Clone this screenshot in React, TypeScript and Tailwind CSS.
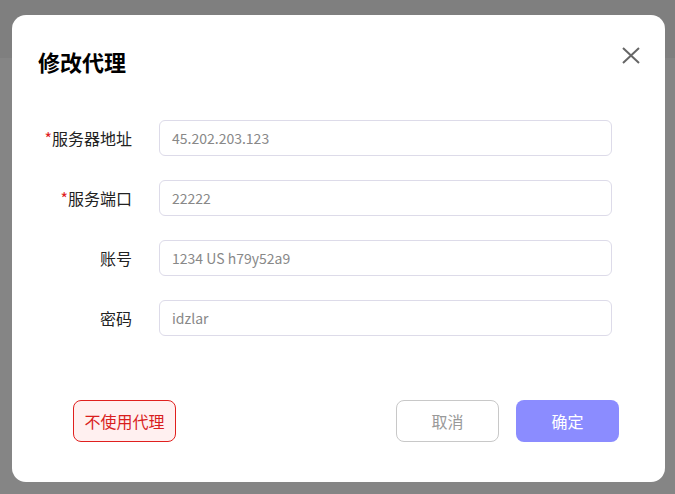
import React from "react";

const fields = [
  { label: "服务器地址", value: "45.202.203.123", required: true },
  { label: "服务端口", value: "22222", required: true },
  { label: "账号", value: "1234 US h79y52a9", required: false },
  { label: "密码", value: "idzlar", required: false },
];

export default function App() {
  return (
    <div
      className="relative w-[675px] h-[494px] overflow-hidden bg-[#858585]"
      style={{ fontFamily: '"Noto Sans CJK SC", "Noto Sans", sans-serif' }}
    >
      {/* page header under the overlay */}
      <div className="h-[58px] bg-[#7f7f7f]" />

      {/* dialog */}
      <div className="absolute left-[12px] top-[15px] w-[653px] h-[467px] rounded-[14px] bg-white pt-[32px] pb-[40px] flex flex-col">
        <div className="flex items-start justify-between pl-[26px] pr-[24px]">
          <h2 className="text-[22px] leading-[28px] font-bold text-black">修改代理</h2>
          <button className="mt-[-2px] w-[20px] h-[20px] flex items-center justify-center text-[#666]">
            <svg width="18" height="17" viewBox="0 0 18 17" fill="none">
              <path d="M1 1L17 16M17 1L1 16" stroke="currentColor" strokeWidth="2" />
            </svg>
          </button>
        </div>

        <div className="mt-[45px] flex flex-col gap-[24px] pl-[26px]">
          {fields.map((f) => (
            <div key={f.label} className="flex items-center gap-[27px]">
              <label className="w-[94px] text-right text-[16px] leading-[24px] text-[#222]">
                {f.required && <span className="text-[#e0201e]">*</span>}
                {f.label}
              </label>
              <div className="w-[453px] h-[36px] rounded-[6px] border border-[#dddbe9] flex items-center px-[12px] text-[14px] text-[#888]">
                {f.value}
              </div>
            </div>
          ))}
        </div>

        <div className="mt-auto flex items-center pl-[61px] pr-[46px]">
          <button className="w-[103px] h-[42px] rounded-[8px] border border-[#e0201e] bg-[#fff0f0] text-[16px] text-[#d91e1e]">
            不使用代理
          </button>
          <div className="ml-auto flex gap-[17px]">
            <button className="w-[103px] h-[42px] rounded-[8px] border border-[#c8c8c8] bg-white text-[16px] text-[#999]">
              取消
            </button>
            <button className="w-[103px] h-[42px] rounded-[8px] bg-[#8b8cff] text-[16px] text-white">
              确定
            </button>
          </div>
        </div>
      </div>
    </div>
  );
}
